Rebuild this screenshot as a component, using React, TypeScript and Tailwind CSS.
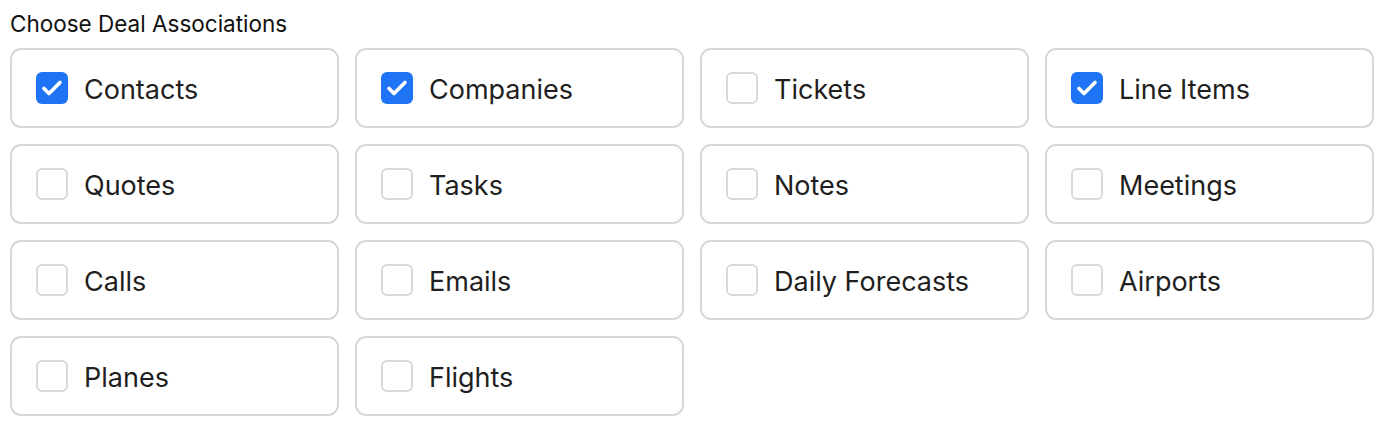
import React, { useState } from 'react'

const OPTIONS = [
  'Contacts',
  'Companies',
  'Tickets',
  'Line Items',
  'Quotes',
  'Tasks',
  'Notes',
  'Meetings',
  'Calls',
  'Emails',
  'Daily Forecasts',
  'Airports',
  'Planes',
  'Flights',
]

export default function App() {
  const [selected, setSelected] = useState<string[]>(['Contacts', 'Companies', 'Line Items'])

  const toggle = (name: string) => {
    setSelected(prev => (prev.includes(name) ? prev.filter(n => n !== name) : [...prev, name]))
  }

  return (
    <div className="bg-white px-[10px] pt-[9px] font-['Inter',sans-serif] text-[#1d1d1f]">
      <h2 className="text-[22.5px] leading-[30px] mb-[9px] text-[#111]">Choose Deal Associations</h2>

      <div className="grid grid-cols-4 gap-4">
        {OPTIONS.map(name => {
          const checked = selected.includes(name)
          return (
            <label
              key={name}
              onClick={() => toggle(name)}
              className="flex items-center gap-4 h-20 px-6 border-2 border-[#d5d8dd] rounded-[11px] cursor-pointer bg-white"
            >
              {checked ? (
                <span className="w-8 h-8 rounded-[6px] bg-[#1f74f5] shrink-0">
                  <svg viewBox="0 0 32 32" className="w-8 h-8" fill="none" stroke="white" strokeWidth={3.6} strokeLinecap="round" strokeLinejoin="round">
                    <path d="M8 16.5l5 5L24 10.5" />
                  </svg>
                </span>
              ) : (
                <span className="w-8 h-8 rounded-[6px] border-2 border-[#d9d9dc] bg-white shrink-0" />
              )}
              <span className="text-[27px] leading-none pt-[2px] text-[#1f1f21]">{name}</span>
            </label>
          )
        })}
      </div>
    </div>
  )
}
